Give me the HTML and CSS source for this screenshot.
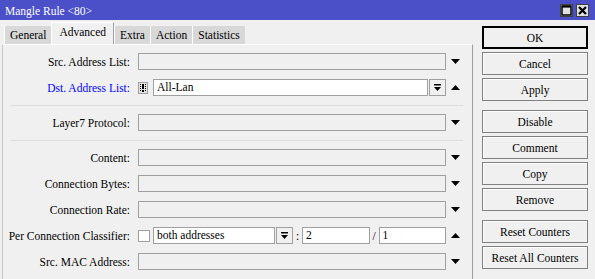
FILE: index.html
```html
<!DOCTYPE html>
<html lang="en">
  <head>
    <meta charset="UTF-8" />
    <title>Mangle Rule &lt;80&gt;</title>
    <link rel="stylesheet" href="styles.css">
  </head>
  <body>
    <!-- Title bar -->
    <div class="titlebar">
      <span class="title">Mangle Rule &lt;80&gt;</span>
      <div class="win-btns">
        <span class="win-btn">
          <svg width="11" height="11" viewBox="0 0 11 11"><rect x="1" y="1" width="9" height="9" fill="none" stroke="#000" stroke-width="1.5"/><line x1="1" y1="1.6" x2="10" y2="1.6" stroke="#000" stroke-width="2"/></svg>
        </span>
        <span class="win-btn">
          <svg width="11" height="11" viewBox="0 0 11 11"><path d="M2 2 L9 9 M9 2 L2 9" stroke="#000" stroke-width="2.2"/></svg>
        </span>
      </div>
    </div>

    <div class="main">
      <div class="left">
        <!-- Tabs -->
        <div class="tabs">
          <span class="tab">General</span>
          <span class="tab active">Advanced</span>
          <span class="tab">Extra</span>
          <span class="tab">Action</span>
          <span class="tab">Statistics</span>
        </div>

        <div class="panel">
          <div class="row">
            <label class="label">Src. Address List:</label>
            <div class="field"></div>
            <span class="arrow"><svg width="9" height="5"><polygon points="0,0 9,0 4.5,5" fill="#000"/></svg></span>
          </div>
          <div class="row">
            <label class="label blue">Dst. Address List:</label>
            <div class="controls">
              <span class="not-box">
                <svg width="10" height="12" viewBox="0 0 10 12"><rect x="0.5" y="0.5" width="9" height="11" fill="#e4e4e4" stroke="#a0a0a0"/><path d="M2.5 2 V10 M7.5 2 V10" stroke="#000" stroke-dasharray="1 1"/><rect x="4" y="2" width="2" height="5" fill="#000"/><rect x="4" y="8" width="2" height="2" fill="#000"/></svg>
              </span>
              <div class="field white grow">All-Lan</div>
              <span class="drop-btn"><svg width="9" height="9" viewBox="0 0 9 9"><rect x="1" y="1" width="7" height="1.5" fill="#000"/><polygon points="1,4 8,4 4.5,8" fill="#000"/></svg></span>
            </div>
            <span class="arrow"><svg width="9" height="5"><polygon points="0,5 9,5 4.5,0" fill="#000"/></svg></span>
          </div>

          <div class="sep"></div>

          <div class="row">
            <label class="label">Layer7 Protocol:</label>
            <div class="field"></div>
            <span class="arrow"><svg width="9" height="5"><polygon points="0,0 9,0 4.5,5" fill="#000"/></svg></span>
          </div>

          <div class="sep"></div>

          <div class="row">
            <label class="label">Content:</label>
            <div class="field"></div>
            <span class="arrow"><svg width="9" height="5"><polygon points="0,0 9,0 4.5,5" fill="#000"/></svg></span>
          </div>
          <div class="row">
            <label class="label">Connection Bytes:</label>
            <div class="field"></div>
            <span class="arrow"><svg width="9" height="5"><polygon points="0,0 9,0 4.5,5" fill="#000"/></svg></span>
          </div>
          <div class="row">
            <label class="label">Connection Rate:</label>
            <div class="field"></div>
            <span class="arrow"><svg width="9" height="5"><polygon points="0,0 9,0 4.5,5" fill="#000"/></svg></span>
          </div>
          <div class="row">
            <label class="label">Per Connection Classifier:</label>
            <div class="controls">
              <span class="check"></span>
              <div class="field white pcc-select">both addresses</div>
              <span class="drop-btn"><svg width="9" height="9" viewBox="0 0 9 9"><rect x="1" y="1" width="7" height="1.5" fill="#000"/><polygon points="1,4 8,4 4.5,8" fill="#000"/></svg></span>
              <span class="sym">:</span>
              <div class="field white grow">2</div>
              <span class="sym">/</span>
              <div class="field white grow">1</div>
            </div>
            <span class="arrow"><svg width="9" height="5"><polygon points="0,5 9,5 4.5,0" fill="#000"/></svg></span>
          </div>
          <div class="row">
            <label class="label">Src. MAC Address:</label>
            <div class="field"></div>
            <span class="arrow"><svg width="9" height="5"><polygon points="0,0 9,0 4.5,5" fill="#000"/></svg></span>
          </div>
        </div>
      </div>

      <!-- Buttons -->
      <div class="buttons">
        <div class="group">
          <button class="default">OK</button>
          <button>Cancel</button>
          <button>Apply</button>
        </div>
        <div class="group">
          <button>Disable</button>
          <button>Comment</button>
          <button>Copy</button>
          <button>Remove</button>
        </div>
        <div class="group">
          <button>Reset Counters</button>
          <button>Reset All Counters</button>
        </div>
      </div>
    </div>
  </body>
</html>
```

FILE: styles.css
```css
body {
  margin: 0;
  background: #f0f0f0;
  font-family: "Liberation Serif", serif;
  font-size: 11.5px;
  color: #000;
  height: 279px;
  overflow: hidden;
}
.titlebar {
  height: 20px;
  background: #4b50c8;
  display: flex;
  align-items: center;
  justify-content: space-between;
  padding: 0 6px 0 5px;
}
.title {
  color: #fff;
  font-size: 11.5px;
  padding-top: 1px;
}
.win-btns {
  display: flex;
  gap: 3px;
  padding-top: 1px;
}
.win-btn {
  width: 13px;
  height: 13px;
  box-sizing: border-box;
  background: #e0e0e0;
  border: 1px solid #404040;
  display: flex;
  align-items: center;
  justify-content: center;
}
.main {
  display: flex;
}
.left {
  width: 471px;
  margin-left: 2px;
}
.tabs {
  display: flex;
  align-items: flex-end;
  height: 24px;
  padding-left: 2px;
}
.tab {
  height: 18px;
  line-height: 18px;
  padding: 0 5px;
  background: #d8d8d8;
  border-left: 1px solid #fff;
}
.tab.active {
  height: 22px;
  line-height: 19px;
  background: #f0f0f0;
  border-top: 1px solid #fff;
  border-left: 1px solid #fff;
  border-right: 1px solid #a0a0a0;
  box-sizing: border-box;
  padding: 0 7px;
}
.panel {
  box-sizing: border-box;
  border-top: 1px solid #fff;
  border-left: 1px solid #c8c8c8;
  border-right: 1px solid #a0a0a0;
  height: 235px;
  padding-top: 8px;
}
.row {
  display: flex;
  align-items: center;
  height: 17px;
  margin-bottom: 9px;
}
.label {
  width: 127px;
  text-align: right;
  margin-right: 8px;
  white-space: nowrap;
}
.blue {
  color: #0000ff;
}
.field {
  width: 308px;
  height: 17px;
  box-sizing: border-box;
  border: 1px solid #a0a0a0;
  background: #f0f0f0;
  line-height: 15px;
  padding-left: 3px;
  white-space: nowrap;
  overflow: hidden;
}
.field.white {
  background: #fff;
}
.controls {
  width: 308px;
  display: flex;
  align-items: center;
}
.controls .grow {
  flex: 1;
  width: auto;
}
.not-box {
  display: flex;
  margin-right: 5px;
}
.drop-btn {
  width: 17px;
  height: 17px;
  box-sizing: border-box;
  border: 1px solid #a0a0a0;
  display: flex;
  align-items: center;
  justify-content: center;
  margin-left: 1px;
}
.check {
  width: 12px;
  height: 12px;
  box-sizing: border-box;
  border: 1px solid #a0a0a0;
  background: #fff;
  margin-right: 3px;
}
.controls .pcc-select {
  width: 122px;
}
.sym {
  width: 9px;
  text-align: center;
}
.arrow {
  width: 18px;
  display: flex;
  justify-content: center;
}
.sep {
  height: 1px;
  background: #dcdcdc;
  margin: 1px 9px 8px 8px;
}
.buttons {
  margin-left: 9px;
  width: 106px;
  padding-top: 6px;
}
.group {
  display: flex;
  flex-direction: column;
  gap: 3px;
  margin-bottom: 9px;
}
button {
  height: 23px;
  font-family: "Liberation Serif", serif;
  font-size: 11.5px;
  background: #f0f0f0;
  border: 1px solid #808080;
  box-shadow: inset 1px 1px 0 #fff;
  padding: 0;
  color: #000;
}
button.default {
  border: 2px solid #000;
  box-shadow: none;
}
```
